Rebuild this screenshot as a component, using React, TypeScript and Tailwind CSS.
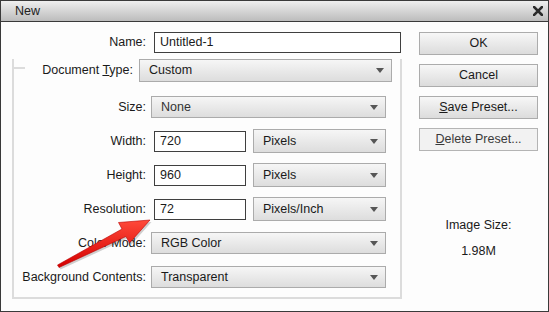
import React from "react";

const Triangle = () => (
  <svg width="8" height="5" viewBox="0 0 8 5" className="shrink-0">
    <polygon points="0,0 8,0 4,5" fill="#565656" />
  </svg>
);

const Select: React.FC<{ value: string; className?: string }> = ({ value, className }) => (
  <div
    className={`flex items-center justify-between pl-[9px] pr-[7px] border border-[#ababab] bg-gradient-to-b from-[#f6f6f6] to-[#dddddd] ${className ?? ""}`}
  >
    <span>{value}</span>
    <Triangle />
  </div>
);

const Input: React.FC<{ value: string; className?: string }> = ({ value, className }) => (
  <div className={`flex items-center pl-[5px] border border-[#3f3f3f] bg-white ${className ?? ""}`}>
    {value}
  </div>
);

const Button: React.FC<{ children: React.ReactNode; disabled?: boolean }> = ({ children, disabled }) => (
  <div
    className={`w-[119px] h-[23px] flex items-center justify-center border ${
      disabled
        ? "border-[#b4b4b4] bg-[#f2f2f2] text-[#3a3a3a]"
        : "border-[#acacac] bg-gradient-to-b from-[#f7f7f7] to-[#dcdcdc]"
    }`}
  >
    {children}
  </div>
);

const Row: React.FC<{ label: string; children: React.ReactNode; top?: string }> = ({ label, children, top }) => (
  <div className={`flex items-center h-[22px] ${top ?? "mt-[12px]"}`}>
    <div className="w-[132px] text-right">{label}</div>
    {children}
  </div>
);

export default function App() {
  return (
    <div className="relative w-[549px] h-[312px] flex flex-col border border-[#3a3a3a] bg-[#fdfdfd] font-['Liberation_Sans',Arial,sans-serif] text-[12.5px] text-[#1a1a1a]">
      <div className="h-[21px] shrink-0 flex items-center justify-between pl-[14px] pr-[5px] border-b border-[#3a3a3a] bg-gradient-to-b from-[#efefef] to-[#bcbcbc]">
        <span className="text-[#222]">New</span>
        <svg width="10" height="10" viewBox="0 0 10 10">
          <path d="M1 1 L9 9 M9 1 L1 9" stroke="#2b2b2b" strokeWidth="2.6" strokeLinecap="square" />
        </svg>
      </div>

      <div className="flex flex-1">
        <div className="pl-[11px] pt-[10px]">
          <div className="flex items-center h-[21px]">
            <div className="w-[134px] text-right">Name:</div>
            <Input value="Untitled-1" className="ml-[8px] w-[247px] h-[21px]" />
          </div>

          <div className="mt-[14px] w-[390px] border-l-2 border-r-2 border-b-2 border-[#dcdcdc] pb-[9px]">
            <div className="-mt-[8px] flex h-[23px]">
              <div className="w-[11px] mt-[8px] self-start border-t-2 border-[#dcdcdc]" />
              <div className="w-[108px] self-center text-right">
                Document <span className="underline">T</span>ype:
              </div>
              <Select value="Custom" className="ml-[6px] w-[253px] h-[23px]" />
            </div>

            <Row label="Size:" top="mt-[14px]">
              <Select value="None" className="ml-[5px] w-[235px] h-[22px] text-[#333]" />
            </Row>
            <Row label="Width:">
              <Input value="720" className="ml-[8px] w-[92px] h-[21px]" />
              <Select value="Pixels" className="ml-[7px] w-[133px] h-[24px]" />
            </Row>
            <Row label="Height:">
              <Input value="960" className="ml-[8px] w-[92px] h-[21px]" />
              <Select value="Pixels" className="ml-[7px] w-[133px] h-[24px]" />
            </Row>
            <Row label="Resolution:">
              <Input value="72" className="ml-[8px] w-[92px] h-[21px]" />
              <Select value="Pixels/Inch" className="ml-[7px] w-[133px] h-[24px]" />
            </Row>
            <Row label="Color Mode:">
              <Select value="RGB Color" className="ml-[5px] w-[235px] h-[22px]" />
            </Row>
            <Row label="Background Contents:">
              <Select value="Transparent" className="ml-[5px] w-[235px] h-[22px]" />
            </Row>
          </div>
        </div>

        <div className="ml-[17px] pt-[10px] w-[119px] flex flex-col">
          <div className="flex flex-col gap-[9px]">
            <Button>OK</Button>
            <Button>Cancel</Button>
            <Button>
              <span>
                <span className="underline">S</span>ave Preset...
              </span>
            </Button>
            <Button disabled>
              <span>
                <span className="underline">D</span>elete Preset...
              </span>
            </Button>
          </div>
          <div className="mt-[66px] text-center leading-[16px]">Image Size:</div>
          <div className="mt-[10px] text-center leading-[16px]">1.98M</div>
        </div>
      </div>

      {/* annotation arrow over the dialog */}
      <svg className="absolute left-0 top-0 pointer-events-none" width="549" height="312" viewBox="0 0 549 312">
        <defs>
          <linearGradient id="arrowRed" x1="0" y1="0" x2="0" y2="1">
            <stop offset="0" stopColor="#ff4a3a" />
            <stop offset="1" stopColor="#d40000" />
          </linearGradient>
        </defs>
        <polygon
          points="56.5,264 121,228 117.5,221.5 149,219 128.5,242 125,235.5 58,266.5"
          fill="#000"
          opacity="0.18"
          transform="translate(1.5,2)"
        />
        <polygon
          points="56.5,264 121,228 117.5,221.5 149,219 128.5,242 125,235.5 58,266.5"
          fill="url(#arrowRed)"
          stroke="#b80000"
          strokeWidth="0.6"
          strokeLinejoin="round"
        />
      </svg>
    </div>
  );
}
